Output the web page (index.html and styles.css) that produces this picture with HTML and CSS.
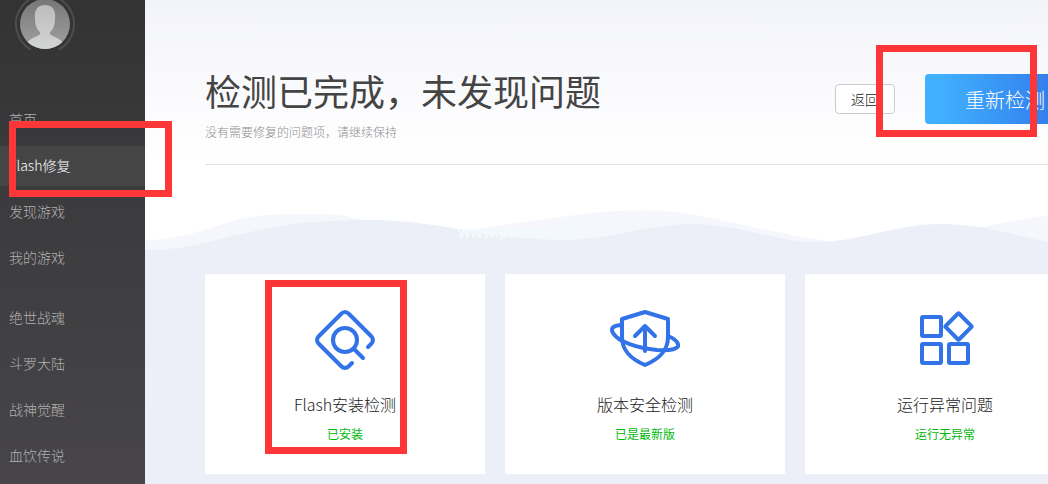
FILE: index.html
```html
<!DOCTYPE html>
<html lang="zh-CN">
<head>
    <meta charset="UTF-8">
    <meta name="viewport" content="width=device-width, initial-scale=1.0">
    <title>Flash修复</title>
    <link rel="stylesheet" href="styles.css">
</head>
<body>
    <aside class="sidebar">
        <svg class="avatar" viewBox="0 0 60 54" width="60" height="54" aria-hidden="true">
            <defs>
                <linearGradient id="avatarBg" x1="0" y1="0" x2="0" y2="1">
                    <stop offset="0" stop-color="#777"/>
                    <stop offset="1" stop-color="#a6a6a6"/>
                </linearGradient>
                <linearGradient id="avatarMan" x1="0" y1="0" x2="0" y2="1">
                    <stop offset="0" stop-color="#bcbcbc"/>
                    <stop offset="1" stop-color="#d6d8d8"/>
                </linearGradient>
                <clipPath id="avatarClip"><circle cx="30" cy="24" r="25"/></clipPath>
            </defs>
            <path d="M16 49.500A29 29 0 1 1 44 49.500" fill="none" stroke="#4d4d4e" stroke-width="2"/>
            <g clip-path="url(#avatarClip)">
                <rect width="60" height="54" fill="url(#avatarBg)"/>
                <path d="M30 5C37 5 41 10 40 18C40 25 38 30 35 32V34C37 37 44 37 48 43V54H12V43C16 37 23 37 25 34V32C22 30 20 25 20 18C19 10 23 5 30 5Z" fill="url(#avatarMan)"/>
            </g>
        </svg>
        <nav>
            <ul class="menu">
                <li><a href="#">首页</a></li>
                <li><a href="#" class="active">Flash修复</a></li>
                <li><a href="#">发现游戏</a></li>
                <li><a href="#">我的游戏</a></li>
            </ul>
            <ul class="menu">
                <li><a href="#">绝世战魂</a></li>
                <li><a href="#">斗罗大陆</a></li>
                <li><a href="#">战神觉醒</a></li>
                <li><a href="#">血饮传说</a></li>
            </ul>
        </nav>
    </aside>

    <main class="main">
        <section class="top">
            <div class="result">
                <div>
                    <h1>检测已完成，未发现问题</h1>
                    <p>没有需要修复的问题项，请继续保持</p>
                </div>
                <div class="actions">
                    <button type="button" class="btn-back">返回</button>
                    <button type="button" class="btn-retry">重新检测</button>
                </div>
            </div>
        </section>

        <div class="wave">
            <svg viewBox="0 0 903 50" preserveAspectRatio="none" aria-hidden="true">
                <path fill="#f5f7fd" d="M0 35C40 35 65 21 100 13C120 9 145 9 173 9C200 9 210 14 235 18L320 26C360 20 400 13 440 9C480 4 520 4 550 10C600 20 650 32 690 37L830 24C860 17 880 13 903 11V50H0Z"/>
                <path fill="#eceff7" d="M0 45C50 45 75 32 115 25C150 17 190 15 227 15C265 15 300 22 333 27C365 32 390 35 417 35C470 35 500 19 548 19C595 19 630 37 672 37C715 37 750 19 795 19C835 19 865 29 903 37V50H0Z"/>
            </svg>
            <span class="watermark">www.pHome.NET</span>
        </div>

        <section class="cards">
            <article class="card">
                <svg width="70" height="64" viewBox="0 0 70 64" aria-hidden="true">
                    <path d="M58 39L61 36Q65 32 61 28L39 6Q35 2 31 6L9 28Q5 32 9 36L31 58Q35 62 39 58L42 55"/>
                    <circle cx="35" cy="32" r="12"/>
                    <path d="M44 41L53 50"/>
                </svg>
                <h2>Flash安装检测</h2>
                <p>已安装</p>
            </article>
            <article class="card">
                <svg width="70" height="64" viewBox="0 0 70 64" aria-hidden="true">
                    <path d="M35 4L58 11V29C58 43 49 51 35 57C21 51 12 43 12 29V11Z"/>
                    <path d="M35 43V18M25 28L35 18L45 28"/>
                    <path d="M12 17C4 17 0 20 3 25C8 34 28 40 47 42C60 43 70 41 68 36C67 33 63 30 58 28"/>
                </svg>
                <h2>版本安全检测</h2>
                <p>已是最新版</p>
            </article>
            <article class="card">
                <svg width="70" height="64" viewBox="0 0 70 64" aria-hidden="true">
                    <rect x="12" y="9" width="19" height="19" rx="1"/>
                    <rect x="12" y="36" width="19" height="19" rx="1"/>
                    <rect x="39" y="36" width="19" height="19" rx="1"/>
                    <rect x="39" y="9" width="19" height="19" rx="1" transform="rotate(45 48.500 18.500)"/>
                </svg>
                <h2>运行异常问题</h2>
                <p>运行无异常</p>
            </article>
        </section>
    </main>

    <div class="mark mark-menu"></div>
    <div class="mark mark-retry"></div>
    <div class="mark mark-card"></div>
</body>
</html>
```

FILE: styles.css
```css
* {
    box-sizing: border-box;
}
body {
    margin: 0;
    display: flex;
    position: relative;
    min-height: 100vh;
    overflow-x: hidden;
    font-family: "Noto Sans CJK SC", sans-serif;
    font-weight: 300;
    color: #444;
}
h1, h2, p, ul {
    margin: 0;
    padding: 0;
    font-weight: inherit;
}

/* sidebar */
.sidebar {
    flex: 0 0 145px;
    background: linear-gradient(#333334, #474549);
}
.avatar {
    display: block;
    margin: 0 0 46px 15px;
}
.menu {
    list-style: none;
    margin-bottom: 20px;
    display: grid;
    gap: 6px;
}
.menu:last-child {
    margin-bottom: 0;
}
.menu a {
    display: block;
    height: 40px;
    padding-left: 9px;
    font-size: 14px;
    line-height: 38px;
    color: #b0b0b0;
    text-decoration: none;
}
.menu a.active {
    background: #454546;
    color: #fff;
}

/* main */
.main {
    flex: 1;
    min-width: 0;
    overflow: hidden;
    background: #eceff7;
}
.top {
    padding: 65px 60px 40px;
    background: linear-gradient(#f3f4fa, #fff 160px);
}
.result {
    width: 880px;
    display: flex;
    justify-content: space-between;
    align-items: flex-start;
    padding-bottom: 22px;
    border-bottom: 1px solid #e2e2e2;
}
.result h1 {
    font-size: 36px;
    line-height: 50px;
    font-weight: 400;
}
.result p {
    margin-top: 7px;
    font-size: 12px;
    line-height: 20px;
    color: #909090;
}
.actions {
    display: flex;
    align-items: center;
    gap: 30px;
    padding-top: 9px;
}
button {
    padding: 0;
    font-family: inherit;
    font-weight: inherit;
    cursor: pointer;
}
.btn-back {
    width: 60px;
    height: 30px;
    border: 1px solid #ccc;
    border-radius: 4px;
    background: #fff;
    color: #222;
    font-size: 14px;
    line-height: 26px;
}
.btn-retry {
    width: 160px;
    height: 50px;
    border: 0;
    border-radius: 4px;
    background: linear-gradient(90deg, #40b0ff 10%, #2f6fe6);
    color: #fff;
    font-size: 20px;
}

.wave {
    position: relative;
    background: #fff;
}
.wave svg {
    display: block;
    width: 100%;
    height: 50px;
}
.watermark {
    position: absolute;
    left: 313px;
    top: 18px;
    font: bold 16px/20px "Liberation Sans", sans-serif;
    color: #f1fbfb;
}

.cards {
    display: grid;
    grid-template-columns: repeat(3, 280px);
    gap: 20px;
    padding: 19px 60px 10px;
}
.card {
    height: 200px;
    padding-top: 34px;
    background: #fff;
    text-align: center;
}
.card svg {
    display: block;
    margin: 0 auto 20px;
    fill: none;
    stroke: #3273e8;
    stroke-width: 4;
    stroke-linecap: round;
    stroke-linejoin: round;
}
.card h2 {
    font-size: 16px;
    line-height: 24px;
    color: #222;
}
.card p {
    margin-top: 8px;
    font-size: 12px;
    line-height: 20px;
    font-weight: 400;
    color: #00b80c;
}

/* red frames drawn over the page */
.mark {
    position: absolute;
    border: 7px solid #fd3737;
    pointer-events: none;
}
.mark-menu {
    left: 9px;
    top: 121px;
    width: 163px;
    height: 76px;
}
.mark-retry {
    left: 876px;
    top: 45px;
    width: 161px;
    height: 92px;
}
.mark-card {
    left: 265px;
    top: 280px;
    width: 142px;
    height: 174px;
}
```
